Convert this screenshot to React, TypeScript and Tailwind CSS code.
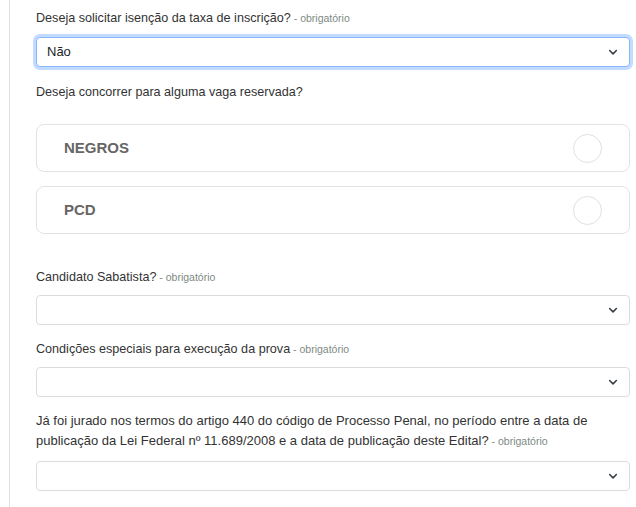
import React from 'react';

const Chevron: React.FC = () => (
  <svg width="12" height="12" viewBox="0 0 16 16" fill="none" className="absolute right-[10px] top-1/2 -translate-y-1/2">
    <path d="M3.5 6l4.5 4.5L12.5 6" stroke="#343a40" strokeWidth="2" strokeLinecap="round" strokeLinejoin="round" />
  </svg>
);

const Label: React.FC<{ text: string; required?: boolean; size?: string }> = ({ text, required, size }) => (
  <label className={`block leading-[20px] text-[#333] ${size ?? 'text-[12.6px]'}`}>
    {text}
    {required && <span className="text-[10.5px] text-[#7d8a84]"> - obrigatório</span>}
  </label>
);

const Select: React.FC<{ value?: string; focused?: boolean }> = ({ value, focused }) => (
  <div
    className={`relative h-[30px] rounded-[4px] bg-white border ${
      focused ? 'border-[#86b7fe] shadow-[0_0_0_3px_rgba(13,110,253,0.25)]' : 'border-[#dcdcdc]'
    }`}
  >
    <span className="absolute left-[10px] top-1/2 -translate-y-1/2 text-[13px] text-[#212529]">{value}</span>
    <Chevron />
  </div>
);

const Option: React.FC<{ title: string }> = ({ title }) => (
  <div className="flex items-center justify-between h-[48px] rounded-[8px] border border-[#e3e3e3] bg-white pl-[27px] pr-[27px]">
    <span className="text-[15px] font-bold text-[#666]">{title}</span>
    <span className="w-[29px] h-[29px] rounded-full border border-[#e0e0e0]" />
  </div>
);

const App: React.FC = () => {
  return (
    <div className="w-[636px] h-[507px] bg-white overflow-hidden" style={{ fontFamily: '"Liberation Sans", Arial, sans-serif' }}>
      <div className="ml-[9px] h-full border-l border-[#e0e0e0] pl-[26px] pr-[6px] pt-[8px]">
        <Label text="Deseja solicitar isenção da taxa de inscrição?" required />
        <div className="mt-[9px]">
          <Select value="Não" focused />
        </div>
        <div className="mt-[15px]">
          <Label text="Deseja concorrer para alguma vaga reservada?" />
        </div>
        <div className="mt-[22px] flex flex-col gap-[14px]">
          <Option title="NEGROS" />
          <Option title="PCD" />
        </div>
        <div className="mt-[33px]">
          <Label text="Candidato Sabatista?" required />
        </div>
        <div className="mt-[8px]">
          <Select />
        </div>
        <div className="mt-[14px]">
          <Label text="Condições especiais para execução da prova" required />
        </div>
        <div className="mt-[8px]">
          <Select />
        </div>
        <div className="mt-[14px] pr-[40px]">
          <Label
            size="text-[13px]"
            text="Já foi jurado nos termos do artigo 440 do código de Processo Penal, no período entre a data de publicação da Lei Federal nº 11.689/2008 e a data de publicação deste Edital?"
            required
          />
        </div>
        <div className="mt-[10px]">
          <Select />
        </div>
      </div>
    </div>
  );
};

export default App;
